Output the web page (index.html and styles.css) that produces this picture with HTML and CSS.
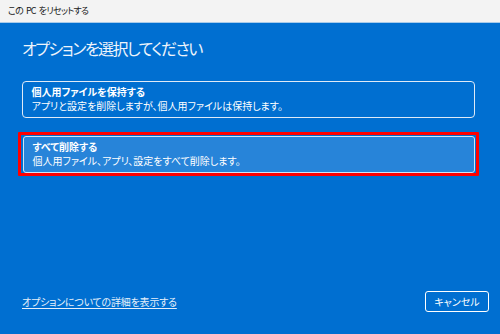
FILE: index.html
```html
<!DOCTYPE html>
<html lang="ja">
<head>
<meta charset="utf-8">
<link rel="stylesheet" href="styles.css">
</head>
<body>
<div class="window">
  <div class="titlebar">この PC をリセットする</div>
  <div class="main">
    <h1 class="heading">オプションを選択してください</h1>
    <div class="options">
      <div class="card">
        <div class="card-title">個人用ファイルを保持する</div>
        <div class="card-desc">アプリと設定を削除しますが、個人用ファイルは保持します。</div>
      </div>
      <div class="highlight">
        <div class="card card-selected">
          <div class="card-title">すべて削除する</div>
          <div class="card-desc">個人用ファイル、アプリ、設定をすべて削除します。</div>
        </div>
      </div>
    </div>
    <div class="footer">
      <a class="link" href="#">オプションについての詳細を表示する</a>
      <button class="cancel">キャンセル</button>
    </div>
  </div>
</div>
</body>
</html>
```
FILE: styles.css
```css
html, body {
  margin: 0;
  padding: 0;
}
body {
  width: 500px;
  height: 334px;
  overflow: hidden;
  font-family: "Noto Sans CJK JP", "Noto Sans", sans-serif;
  font-feature-settings: "palt";
}
.window {
  display: flex;
  flex-direction: column;
  height: 334px;
}
.titlebar {
  height: 22px;
  line-height: 22px;
  background: #f3f3f3;
  border-bottom: 1px solid #a9cbea;
  padding-left: 8px;
  font-size: 9px;
  letter-spacing: -0.7px;
  word-spacing: 1.5px;
  color: #1a1a1a;
}
.main {
  flex: 1;
  background: #006fd1;
  display: flex;
  flex-direction: column;
  padding: 0 11px 22px 22px;
  color: #ffffff;
}
.heading {
  margin: 15px 0 0 0;
  font-size: 16px;
  letter-spacing: -1.5px;
  line-height: 20px;
  font-weight: normal;
  color: #eef4fb;
}
.options {
  display: flex;
  flex-direction: column;
  gap: 13.5px;
  margin: 23px 14px 0 0;
}
.card {
  height: 37px;
  box-sizing: border-box;
  border: 1.5px solid #dfeaf7;
  border-radius: 4px;
  padding: 3px 0 0 8.5px;
  font-size: 10px;
  line-height: 14px;
}
.card-title {
  font-weight: bold;
}
.highlight {
  margin: 0 -4px;
  border: 3px solid #ff0000;
  border-radius: 1px;
  padding: 1.5px 1px 0 2px;
}
.card-selected {
  background: #2784d9;
  border-color: #cfe2f5;
  border-radius: 3px;
}
.footer {
  margin-top: auto;
  display: flex;
  justify-content: space-between;
  align-items: center;
}
.link {
  color: #e6effa;
  font-size: 10px;
  letter-spacing: -0.2px;
  line-height: 14px;
  text-decoration: underline;
  text-underline-offset: 2px;
}
.cancel {
  width: 64px;
  height: 21px;
  box-sizing: border-box;
  background: transparent;
  border: 1.5px solid #ffffff;
  border-radius: 3px;
  color: #ffffff;
  font-family: inherit;
  font-feature-settings: "palt";
  font-size: 10px;
  padding: 0;
}
```
